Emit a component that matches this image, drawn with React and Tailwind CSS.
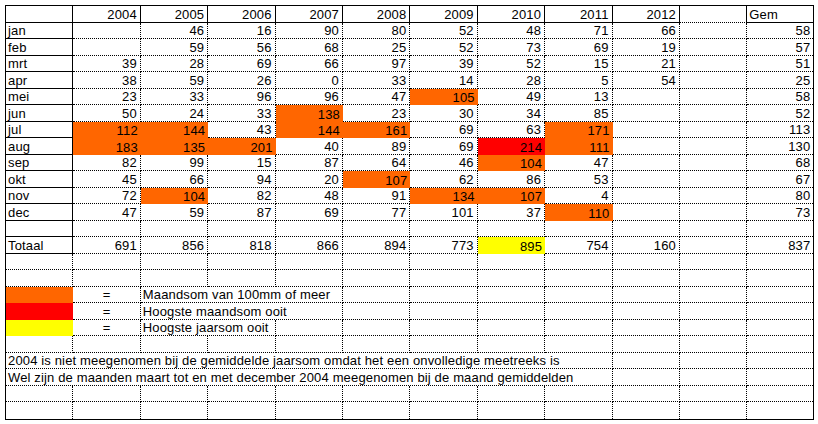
import React from "react";

const years = ["2004", "2005", "2006", "2007", "2008", "2009", "2010", "2011", "2012"];

const months = [
    ["jan", ["", 46, 16, 90, 80, 52, 48, 71, 66, "", 58]],
    ["feb", ["", 59, 56, 68, 25, 52, 73, 69, 19, "", 57]],
    ["mrt", [39, 28, 69, 66, 97, 39, 52, 15, 21, "", 51]],
    ["apr", [38, 59, 26, 0, 33, 14, 28, 5, 54, "", 25]],
    ["mei", [23, 33, 96, 96, 47, 105, 49, 13, "", "", 58]],
    ["jun", [50, 24, 33, 138, 23, 30, 34, 85, "", "", 52]],
    ["jul", [112, 144, 43, 144, 161, 69, 63, 171, "", "", 113]],
    ["aug", [183, 135, 201, 40, 89, 69, 214, 111, "", "", 130]],
    ["sep", [82, 99, 15, 87, 64, 46, 104, 47, "", "", 68]],
    ["okt", [45, 66, 94, 20, 107, 62, 86, 53, "", "", 67]],
    ["nov", [72, 104, 82, 48, 91, 134, 107, 4, "", "", 80]],
    ["dec", [47, 59, 87, 69, 77, 101, 37, 110, "", "", 73]],
];

const totals = [691, 856, 818, 866, 894, 773, 895, 754, 160, "", 837];

// grid column (1 = 2004) that gets a fill, per month
const fills = {
    mei: { 6: "o" },
    jun: { 4: "o" },
    jul: { 1: "o", 2: "o", 4: "o", 5: "o", 8: "o" },
    aug: { 1: "o", 2: "o", 3: "o", 7: "r", 8: "o" },
    sep: { 7: "o" },
    okt: { 5: "o" },
    nov: { 2: "o", 6: "o", 7: "o" },
    dec: { 8: "o" },
};

const rightCls = {
    dotted: "[border-right:1px_dotted_#000]",
    solid: "[border-right:1px_solid_#000]",
    none: "",
};
const bottomCls = {
    dotted: "[border-bottom:1px_dotted_#000]",
    solid: "[border-bottom:1px_solid_#000]",
    none: "",
};
const fillCls = { o: "bg-[#ff6600]", r: "bg-[#ff0000]", y: "bg-[#ffff00]" };
const alignCls = {
    right: "justify-end pr-[3px]",
    left: "justify-start pl-[2px]",
    center: "justify-center",
};
const spanCls = { 1: "", 2: "col-span-2", 3: "col-span-3", 9: "col-span-9" };

function Cell({ children, right = "dotted", bottom = "dotted", fill, align = "right", span = 1 }) {
    const borders = fill ? "" : `${rightCls[right]} ${bottomCls[bottom]}`;
    return (
        <div
            className={`flex items-end overflow-visible whitespace-nowrap ${alignCls[align]} ${borders} ${fill ? fillCls[fill] : ""} ${spanCls[span]}`}
        >
            {children}
        </div>
    );
}

// blank cells from column `from` to the end of a row
function Blanks({ from, last }) {
    const cells = [];
    for (let c = from; c < 12; c++) {
        cells.push(<Cell key={c} right={c === 11 ? "none" : "dotted"} bottom={last ? "none" : "dotted"} />);
    }
    return cells;
}

export default function App() {
    return (
        <div className="pl-[5px] pt-[5px] bg-white min-h-screen">
            <div className="grid w-fit grid-cols-[repeat(11,67.4px)_66px] auto-rows-[16.52px] border border-black font-['Liberation_Sans',Arial,sans-serif] text-[13px] leading-[14px] tracking-[0.15px] text-black">
                {/* HEADER */}
                <Cell right="solid" bottom="solid" />
                {years.map((y) => (
                    <Cell key={y} right="solid" bottom="solid">{y}</Cell>
                ))}
                <Cell right="solid" bottom="dotted" />
                <Cell right="none" bottom="solid" align="left">Gem</Cell>

                {/* MONTHS */}
                {months.map(([name, values]) => (
                    <React.Fragment key={name}>
                        <Cell right="solid" bottom="solid" align="left">{name}</Cell>
                        {values.map((v, i) => (
                            <Cell
                                key={i}
                                right={i === 10 ? "none" : "dotted"}
                                fill={fills[name] && fills[name][i + 1]}
                            >
                                {v}
                            </Cell>
                        ))}
                    </React.Fragment>
                ))}

                {/* empty row before totals */}
                <Cell right="solid" bottom="solid" />
                <Blanks from={1} />

                {/* TOTAAL */}
                <Cell right="solid" bottom="solid" align="left">Totaal</Cell>
                {totals.map((v, i) => (
                    <Cell key={i} right={i === 10 ? "none" : "dotted"} fill={i === 6 ? "y" : undefined}>
                        {v}
                    </Cell>
                ))}

                <Blanks from={0} />
                <Blanks from={0} />

                {/* LEGEND */}
                <Cell fill="o" />
                <Cell align="center">=</Cell>
                <Cell span={3} align="left">Maandsom van 100mm of meer</Cell>
                <Blanks from={5} />

                <Cell fill="r" />
                <Cell align="center">=</Cell>
                <Cell span={3} align="left">Hoogste maandsom ooit</Cell>
                <Blanks from={5} />

                <Cell fill="y" />
                <Cell align="center">=</Cell>
                <Cell span={2} align="left">Hoogste jaarsom ooit</Cell>
                <Blanks from={4} />

                <Blanks from={0} />

                {/* NOTES */}
                <Cell span={9} align="left">
                    2004 is niet meegenomen bij de gemiddelde jaarsom omdat het een onvolledige meetreeks is
                </Cell>
                <Blanks from={9} />
                <Cell span={9} align="left">
                    Wel zijn de maanden maart tot en met december 2004 meegenomen bij de maand gemiddelden
                </Cell>
                <Blanks from={9} />

                <Blanks from={0} />
                <Blanks from={0} last />
            </div>
        </div>
    );
}
